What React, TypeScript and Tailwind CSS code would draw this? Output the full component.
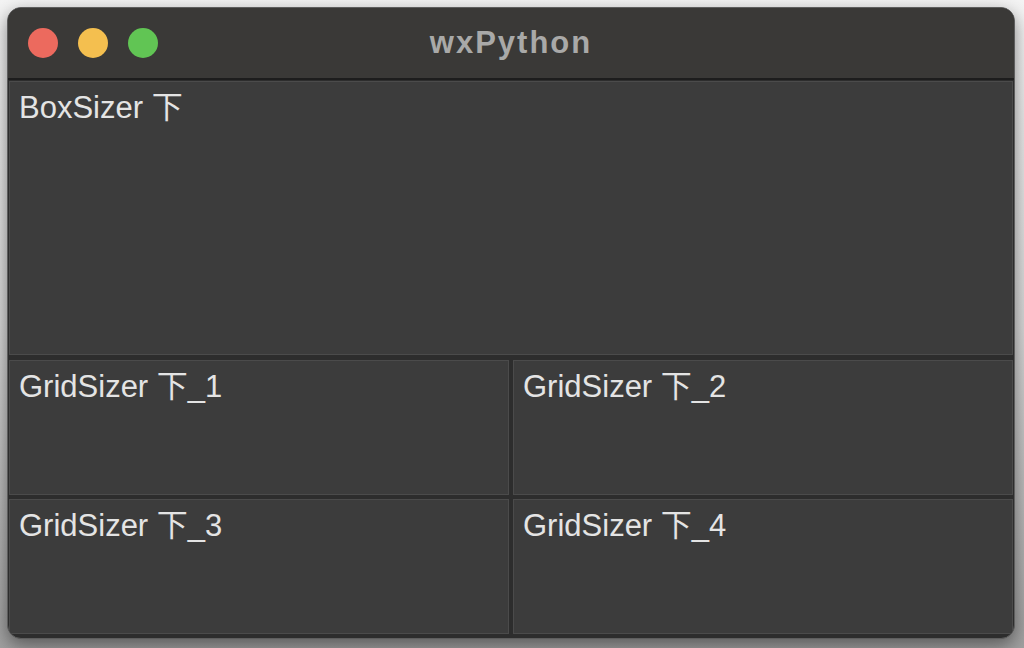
const font = { fontFamily: '"Liberation Sans", "Noto Sans CJK SC", sans-serif' }

function Panel({ label, className = "" }: { label: string; className?: string }) {
  return (
    <div className={`bg-[#3c3c3c] border border-[#4b4b4b] px-[9px] pt-[9px] ${className}`}>
      <span className="text-[31px] leading-[34px] text-[#e4e4e4]">{label}</span>
    </div>
  )
}

export default function App() {
  const cells = ["GridSizer 下_1", "GridSizer 下_2", "GridSizer 下_3", "GridSizer 下_4"]

  return (
    <div
      className="w-[1024px] h-[648px] bg-gradient-to-b from-[#f4f4f4] via-[#d8d8d8] to-[#a0a0a0] pt-[7px] pl-[7px] overflow-hidden"
      style={font}
    >
      <div className="w-[1008px] h-[632px] rounded-[14px] border border-[#5e5e5e] bg-[#2d2d2d] overflow-hidden flex flex-col shadow-[0_6px_18px_rgba(0,0,0,0.45)]">
        <div className="relative h-[72px] shrink-0 bg-[#3a3937] flex items-center pl-[20px] gap-[20px] border-b-2 border-[#1d1d1d]">
          <span className="w-[30px] h-[30px] rounded-full bg-[#ec6a5e]" />
          <span className="w-[30px] h-[30px] rounded-full bg-[#f4bf4f]" />
          <span className="w-[30px] h-[30px] rounded-full bg-[#61c554]" />
          <div className="absolute inset-0 flex items-center justify-center pointer-events-none">
            <span className="text-[31px] font-bold text-[#a9a9a8] tracking-[2px]">wxPython</span>
          </div>
        </div>

        <div className="flex-1 flex flex-col gap-[5px] px-[1px] pt-[1px] pb-[4px]">
          <Panel label="BoxSizer 下" className="h-[274px] shrink-0" />
          <div className="flex-1 grid grid-cols-2 grid-rows-2 gap-x-[4px] gap-y-[4px]">
            {cells.map((c) => (
              <Panel key={c} label={c} />
            ))}
          </div>
        </div>
      </div>
    </div>
  )
}
